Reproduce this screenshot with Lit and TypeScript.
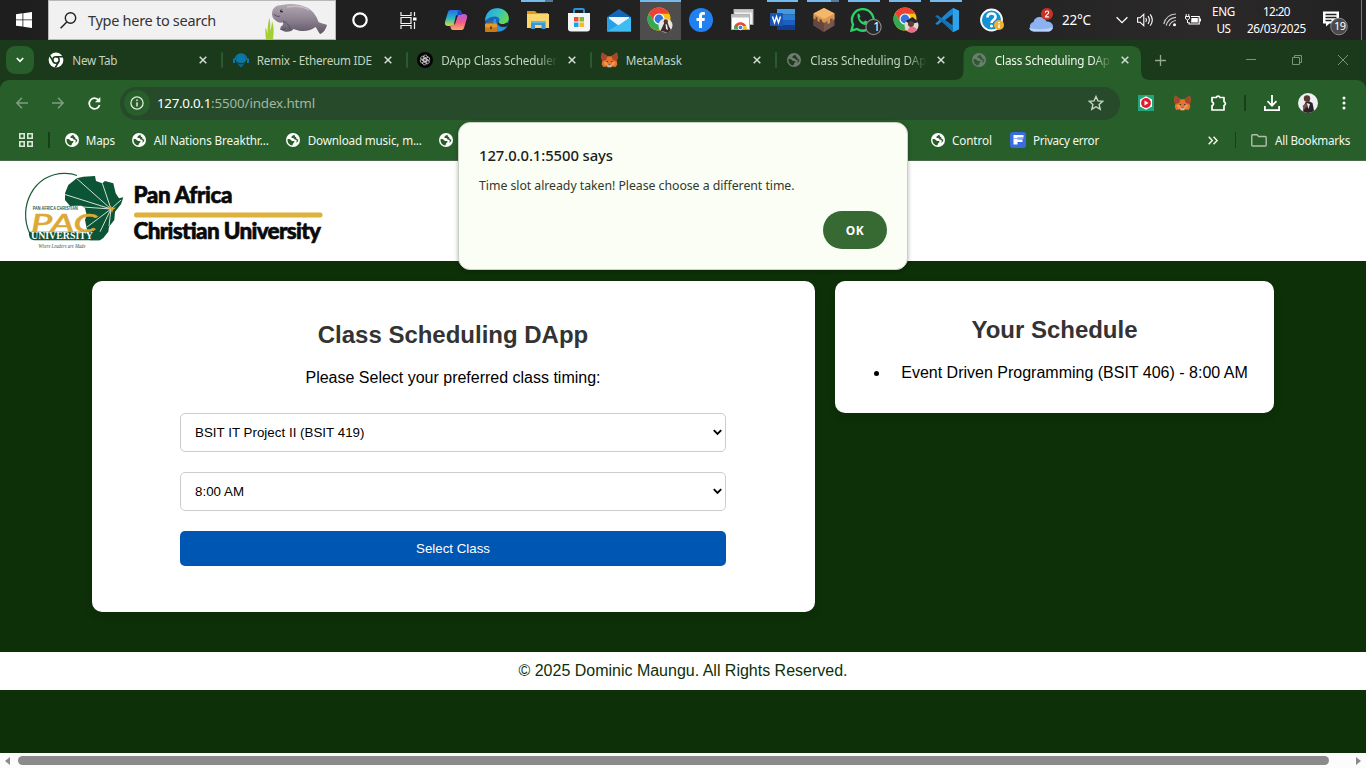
import { LitElement, html, css, svg } from "lit";
import { customElement, property } from "lit/decorators.js";

/** A line of text that is tracked so that it spans a given width. */
@customElement("fit-text")
class FitText extends LitElement {
  @property({ type: Number }) w = 0;
  @property() text = "";
  static styles = css`
    :host { display: inline-block; flex: none; white-space: pre; }
    .t { display: inline-block; }
  `;
  render() {
    return html`<span class="t">${this.text}</span>`;
  }
  updated() {
    const el = this.renderRoot.querySelector(".t") as HTMLElement;
    el.style.letterSpacing = "0px";
    const natural = el.getBoundingClientRect().width;
    el.style.letterSpacing = (this.w - natural) / this.text.length + "px";
  }
}

const icon = (w: number, h: number, vb: string, body: unknown) =>
  html`<svg class="ic" width=${w} height=${h} viewBox=${vb} fill="none">${body}</svg>`;

const globe = (bg: string, fg: string) =>
  icon(14, 14, "0 0 14 14", svg`
    <circle cx="7" cy="7" r="7" fill=${bg}/>
    <path d="M1.500 6.200C3 5.600 4.600 6.300 5.400 7.500c.6.900 1.800.300 2.600.6.700.3.600 1.100 0 1.500-.9.500-.8 1.500-1.800 2.900C3.500 12.200 1.300 9.800 1.500 6.200z" fill=${fg}/>
    <path d="M8.600 1.700C8 2.300 6.300 2.100 6 3.200c-.9.300-1 1.800.3 1.900 1.200 0 1.700.3 2.100 1.100.5.900 1.600.3 2.200 1 .4.600 0 1.600-.6 2.500 1.500-.6 2.500-2 2.300-3.300-.7-.2-1.100 0-1.600-.5-.5-.6 0-1.500-.9-1.900-.8-.3-1.300-.9-1.200-2.300z" fill=${fg}/>`);

const fox = icon(17, 16, "0 0 18 17", svg`
  <path d="M1 .5 7 4.500h4L17 .500l.8 5.500-1.200 3.500.7 3.500-1.600 3-3.500-.7-1.500 1.200H7.300l-1.500-1.200-3.500.7L.7 13l.7-3.500L.2 6z" fill="#e8722b"/>
  <path d="M1 .5 7 4.500 5.300 8.500 1.400 9.500.2 6zM17 .5 11 4.500l1.700 4 3.900 1L17.800 6z" fill="#a8452a"/>
  <path d="M2.500 10.500 6.500 10l1 4-3 .5zM15.500 10.500l-4-.5-1 4 3 .5z" fill="#f5914a"/>
  <path d="M5 9.300l2.500.5-.4 1.300zM13 9.300l-2.500.5.4 1.300z" fill="#1f3a44"/>
  <path d="M7.300 13.200h3.400l.4 1.600-.8 1H7.700l-.8-1z" fill="#d8cfc6"/>
  <path d="M7.900 13.200h2.200l.2 1H7.700z" fill="#26313a"/>`);

const chromeBall = svg`
  <circle cx="12" cy="12" r="11.5" fill="#fbc116"/>
  <path d="M2 6.300A11.500 11.500 0 0 1 22.300 6.700L12 6.700 7.200 14.600z" fill="#ea4335"/>
  <path d="M2 6.300A11.500 11.500 0 0 0 11 23.450L16.500 14.800H7.200z" fill="#34a853"/>
  <circle cx="12" cy="12" r="5.500" fill="#fff"/><circle cx="12" cy="12" r="4.400" fill="#3474e0"/>`;

const ICONS: Record<string, unknown> = {
  copilot: icon(24, 24, "0 0 24 24", svg`
    <defs>
      <linearGradient id="a" x1="0" y1="0" x2="0" y2="1"><stop stop-color="#2b6be8"/><stop offset=".5" stop-color="#25b5c4"/><stop offset="1" stop-color="#d9d83c"/></linearGradient>
      <linearGradient id="b" x1="0" y1="0" x2="0" y2="1"><stop stop-color="#b65be6"/><stop offset=".5" stop-color="#ee5b86"/><stop offset="1" stop-color="#ffab68"/></linearGradient>
    </defs>
    <path d="M6.500 2H15c1.500 0 2 1 2.500 2.800L18 7h-2.500c-1.500 0-2.500.8-3 2.300L10.800 15c-.6 1.800-1.500 3-3.300 3H4c-2.500 0-3.500-1.500-3-4L4 4c.4-1.300 1.200-2 2.500-2z" fill="url(#a)"/>
    <path d="M17.500 22H9c-1.500 0-2-1-2.500-2.800L6 17h2.500c1.500 0 2.300-.8 2.800-2.300L13.200 9c.6-1.800 1.500-3 3.300-3H20c2.500 0 3.500 1.500 3 4l-3 10c-.4 1.300-1.200 2-2.500 2z" fill="url(#b)"/>
    <path d="M14 2c2 .1 3 1.500 4 5h-2.500c-1 0-1.600.2-2.200 1z" fill="#1e46c8"/>
    <path d="M11.300 14.700L13.200 9c.2-.7.500-1.300.9-1.800L12 7.300 9.800 16.800c.7-.4 1.200-1.100 1.500-2.100z" fill="#222325"/>`),
  edge: icon(24, 24, "0 0 24 24", svg`
    <defs><linearGradient id="e" x1="0" y1="0" x2="1" y2=".4"><stop stop-color="#2a9de0"/><stop offset=".6" stop-color="#35c4c4"/><stop offset="1" stop-color="#63d850"/></linearGradient></defs>
    <circle cx="12" cy="12" r="11.800" fill="#1767b8"/>
    <path d="M.2 11C1.500 4 6 .2 12.200.2c7 0 11.600 4.600 11.600 9.800 0 4-3 6-6.300 6-2.500 0-4.300-1-3.500-2.300 1.600-2.500-.5-5.200-4-5.200C6 8.500 2.500 10 .2 13z" fill="url(#e)"/>
    <path d="M13.500 13.500c-.6 1.400 1 2.600 4 2.600 2 0 3.500-.6 4.600-1.500l1.400 1.400-3 3-5-.5-3-3z" fill="#222325"/>
    <path d="M9 11c-2 3-1.500 9.500 3.500 12.500 4 .3 7.500-1.500 9.500-5-5 2-11.500.5-11-7.500z" fill="#2c93e0"/>
    <rect y="15.500" width="12" height="8.500" rx="1" fill="#c9791c"/><rect y="15.500" width="12" height="4" rx="1" fill="#e39a2d"/>
    <path d="M4 15.500V14h4v1.500" stroke="#a0600f"/><rect x="5" y="18.500" width="2" height="2.500" fill="#6d3f08"/>`),
  folder: icon(22, 20, "0 0 22 20", svg`
    <path d="M0 1h8l2 2h11v15H0z" fill="#d99c22"/><path d="M0 4h22v14H0z" fill="#fad66c"/>
    <path d="M4 11h14.500v8h-4v-4h-6.500v4H4z" fill="#3d96d4"/><path d="M4 11h14.500v2H4z" fill="#64b5e6"/>`),
  store: icon(24, 24, "0 0 24 24", svg`
    <path d="M7 6V2.200C7 1.500 7.500 1 8.200 1h7.600c.7 0 1.200.5 1.200 1.200V6" stroke="#2b93d8" stroke-width="2"/>
    <path d="M1 5h22v15.500c0 2-1 3-3 3H4c-2 0-3-1-3-3z" fill="#f4f5f6"/>
    <path d="M7 9h4.500v4.500H7z" fill="#f0502a"/><path d="M12.500 9H17v4.500h-4.500z" fill="#7ebb2d"/><path d="M7 14.500h4.500V19H7z" fill="#22a2e8"/><path d="M12.500 14.500H17V19h-4.500z" fill="#fbb924"/>`),
  mail: icon(24, 23, "0 0 24 23", svg`
    <path d="M0 8 12 0l12 8v14H0z" fill="#1467b8"/><path d="M2 8h20v9H2z" fill="#e9f4fb"/>
    <path d="M0 8l12 9L24 8v14.500H0z" fill="#27a0e6"/><path d="M24 8v14.500H0z" fill="#3fbcf2"/><path d="M1.500 8h21L12 16z" fill="#eef6fc"/>`),
  chromeA: icon(26, 26, "0 0 26 26", svg`${chromeBall}
    <circle cx="18.500" cy="18.500" r="7" fill="#e9e6e2"/><path d="M13.500 24l3-6.500 1-2h3l1.500 4 2 3.500-3 2.400z" fill="#3b2b30"/><circle cx="18.800" cy="14.500" r="2.200" fill="#5b352d"/><path d="M18.500 17l1.500.5 1 5.500-2-1z" fill="#efeaea"/>`),
  facebook: icon(24, 24, "0 0 24 24", svg`
    <circle cx="12" cy="12" r="12" fill="#1f80f2"/>
    <path d="M10 20v-7H7.500V10H10V8c0-2.700 1.500-4 3.800-4 1 0 1.900.1 2.200.2v2.600h-1.500c-1.200 0-1.500.7-1.500 1.600V10h2.900l-.4 3H13v7z" fill="#fff"/>`),
  remote: icon(24, 22, "0 0 24 22", svg`
    <rect x="4" y="0.500" width="19" height="15" fill="#f1f1f1" stroke="#a9a9a9"/><rect x="4" y="0.500" width="19" height="3" fill="#c5c5c5"/>
    <rect x="1.500" y="5.500" width="18" height="15" fill="#fff" stroke="#a9a9a9"/><rect x="1.500" y="5.500" width="18" height="3" fill="#bdbdbd"/>
    <path d="M4 20a6.500 6.500 0 0 1 13 0z" fill="#f6c026"/><path d="M4 18a6.500 6.500 0 0 1 12.200-1H11l-3 3z" fill="#e64a3b"/><path d="M4 20c0-2 .5-3 1.500-4l3 4z" fill="#3ba757"/><circle cx="10.500" cy="18.500" r="2.300" fill="#3c7de6" stroke="#fff"/>`),
  word: icon(25, 22, "0 0 25 22", svg`
    <path d="M7 0h18v5.500H7z" fill="#3f9be8"/><path d="M7 5.500h18V11H7z" fill="#2b7cd3"/><path d="M7 11h18v5.500H7z" fill="#1d5fbe"/><path d="M7 16.500h18V21H7z" fill="#103f91"/>
    <rect y="4" width="13" height="13" rx="1" fill="#1a56b4"/><path d="M2.500 7.500l2 6.200 2-6.200 2 6.200 2-6.200" stroke="#fff" stroke-width="1.400"/>`),
  block: icon(22, 24, "0 0 22 24", svg`
    <path d="M11 0l10.500 5.500v12L11 24 .5 17.500v-12z" fill="#77564e"/><path d="M.5 6L11 12v12L.5 17.500z" fill="#654740"/>
    <path d="M11 0l10.500 5.500V11l-2 1.500V10l-2.500 1v4l-2.500 1v-3L11 15l-2-1.500V12l-2.500-1v3l-2-1V9.500L2.500 8.500v3L.5 10.500v-5z" fill="#d9984f"/><path d="M11 0l10.500 5.500L11 11 .5 5.500z" fill="#f3b86c"/>`),
  whatsapp: icon(34, 28, "0 0 34 28", svg`
    <path d="M3.500 24.500l1.500-6A10.800 10.800 0 1 1 9 23z" fill="#222325" stroke="#2bd366" stroke-width="2.300"/>
    <path d="M9.500 8l1.500-.5 1.500 3-1.200 1.500c1 2 2.200 3.200 4.200 4l1.700-1.600 3 1.500c0 2-1.500 3-3.300 3C12 18.500 9 13 9.500 8z" fill="#2bd366"/>
    <circle cx="25.500" cy="21" r="7.600" fill="#29292b" stroke="#858587" stroke-width="1.200"/>`),
  chromeB: icon(26, 26, "0 0 26 26", svg`${chromeBall}
    <circle cx="18.500" cy="18.500" r="7" fill="#e9d4d6"/><path d="M12.500 14l7-4 6 5-3 1-6 1z" fill="#222631"/><circle cx="18" cy="17" r="3" fill="#633c36"/><path d="M14 24l3-4h4l3 2-3 3.500h-4z" fill="#ee6c88"/>`),
  vscode: icon(24, 24, "0 0 24 24", svg`
    <path d="M18 0l6 2.800v18.400L18 24 7 13.500 2.500 17 .2 15.700 14 3z" fill="#1a86cf"/><path d="M.2 8.300L2.500 7 18 19v5L7 14z" fill="#1272b8"/><path d="M17.500 6.500v11L10 12z" fill="#222325"/><path d="M18 0l6 2.800v18.400L18 24z" fill="#2ea3ea"/>`),
  help: icon(24, 24, "0 0 24 24", svg`
    <circle cx="11.500" cy="12" r="10.500" fill="#1391d3" stroke="#fff" stroke-width="1.800"/>
    <path d="M7.500 9.500C7.500 7 9 5.500 11.500 5.500s4 1.400 4 3.500c0 3-4 3-4 6" stroke="#fff" stroke-width="2.600"/><circle cx="11.500" cy="18" r="1.600" fill="#fff"/>
    <circle cx="19" cy="17" r="5" fill="#eeb132"/><path d="M19 14v1.200M19 16.500V20" stroke="#fff" stroke-width="1.600"/>`),
};

const PINNED: { name: string; cls: string }[] = [
  { name: "copilot", cls: "" },
  { name: "edge", cls: "" },
  { name: "folder", cls: "open multi" },
  { name: "store", cls: "" },
  { name: "mail", cls: "" },
  { name: "chromeA", cls: "open current" },
  { name: "facebook", cls: "" },
  { name: "remote", cls: "" },
  { name: "word", cls: "open" },
  { name: "block", cls: "open multi" },
  { name: "whatsapp", cls: "open" },
  { name: "chromeB", cls: "open" },
  { name: "vscode", cls: "open" },
];

const TAB_ICONS: Record<string, unknown> = {
  chrome: icon(16, 16, "0 0 16 16", svg`<circle cx="8" cy="8" r="7.400" fill="#fff"/><circle cx="8" cy="8" r="3.200" stroke="#1a3a1b" stroke-width="1.500"/><path d="M8 4.800H15M5.200 9.500 1.700 3.600M10.800 9.500 7.300 15.500" stroke="#1a3a1b" stroke-width="1.500"/>`),
  remix: icon(16, 16, "0 0 16 16", svg`<circle cx="8" cy="7.500" r="5" fill="#0a77a8"/><path d="M2 8a6 6 0 0 1 12 0" stroke="#0a77a8" stroke-width="1.300"/><path d="M0 6.500h2v4.500H0zM14 6.500h2v4.500h-2z" fill="#0a77a8"/><path d="M3.500 10.500L8 15.500l4.500-5z" fill="#0b6b96"/><path d="M4 10.500c2 1.800 6 1.800 8 0" stroke="#1a3a1b"/>`),
  gpt: icon(16, 16, "0 0 16 16", svg`<circle cx="8" cy="8" r="8" fill="#050505"/><g stroke="#e6e6e6" stroke-width=".7">${[0, 60, 120, 180, 240, 300].map((r) => svg`<path transform=${`rotate(${r} 8 8)`} d="M6.300 9V5.200C6.300 3.500 8 2.700 9.400 3.400c1 .5 1.200 1.500 1.200 2.300L8 7.200"/>`)}</g>`),
  fox,
  globe: globe("#6f7b70", "#1c3d1d"),
  globeOn: globe("#6f7b70", "#285e2a"),
};

const TABS = [
  { ic: "chrome", text: "New Tab", w: 45, fade: false, on: false },
  { ic: "remix", text: "Remix - Ethereum IDE", w: 115, fade: false, on: false },
  { ic: "gpt", text: "DApp Class Scheduler", w: 116, fade: true, on: false },
  { ic: "fox", text: "MetaMask", w: 56, fade: false, on: false },
  { ic: "globe", text: "Class Scheduling DAp", w: 116, fade: true, on: false },
  { ic: "globeOn", text: "Class Scheduling DAp", w: 115, fade: true, on: true },
];

const cross = icon(8, 8, "0 0 8 8", svg`<path d="M.7.7l6.600 6.600M7.300.7.7 7.300" stroke="currentColor" stroke-width="1.500"/>`);

const manatee = icon(64, 38, "0 0 64 38", svg`
  <defs><linearGradient id="m" x1="0" y1="0" x2="0" y2="1"><stop stop-color="#b3a9b4"/><stop offset=".55" stop-color="#8a7f8e"/><stop offset="1" stop-color="#5e5564"/></linearGradient></defs>
  <path d="M1 38c-1-4 0-9-1-12 2 1 2 4 2.500 7 0-6 .5-13 2-17 1 5 1 9 .5 13 1-2 2-7 2-10 2 5 2 11 1 19z" fill="#a3cf35"/>
  <path d="M7 12c0-6 4-9 10-9 8-2 18-1 26 3 6 4 9 9 10.500 14 3 2 6.500 1.500 8.500 3-1 4-3.500 8-7 9-2-2-2.500-5-4.500-7-6 5-15 5-22 2-1 2-5 3.500-9 2.500-3-1-5-3-3.500-5 1.500-.8 2.500-2 2-4-3.500.5-6-.500-8-2.500-2-1.500-3-3.500-3-6z" fill="url(#m)"/>
  <path d="M18 19c3 1.500 7 4 7 9M9 12c1 2 4 3 6 2M15 27c2 1 4 1 6-1" stroke="#584d5d" stroke-width="1"/><circle cx="16.500" cy="9" r="1.500" fill="#2c2530"/><circle cx="17" cy="8.500" r=".5" fill="#fff"/>
  <path d="M22 5c8-1.500 16-1 22 3" stroke="#c8bfc9" stroke-width="1.500"/>`);

const person = icon(20, 20, "0 0 20 20", svg`
  <defs><clipPath id="p"><circle cx="10" cy="10" r="10"/></clipPath></defs>
  <g clip-path="url(#p)"><path d="M0 0h20v20H0z" fill="#eef1f3"/><path d="M5 20l.500-6 2-5 3-1 4 2 2 10z" fill="#2b2229"/><path d="M8.500 10l2 6 1.500-5z" fill="#e8e8ee"/><circle cx="9" cy="5.500" r="3.200" fill="#5a3730"/><path d="M4.500 13l3-2.500 2 2-3 4z" fill="#7c5046"/></g>`);

const logo = icon(340, 100, "0 0 340 100", svg`
  <path d="M30 73C17 46 34 12 65 12.300q7 0 12 2.200" stroke="#1f5b3b" stroke-width="1.200"/>
  <path d="M76.700 17.300 83.300 15.700 95 15l1 5 6.300 2.300 2.700-2.300 8.300 2.300 2.400 10 3.300 5 4.300-1-2.300 7-6 7.400-.7 8.300-5.300 6.700-.7 5L103.300 77l-3.300 2.300H90L86.700 67.300 85 59l1.700-5-1.700-6.700-3.300-2.600H76l-6 .3-5-6v-6.700L68.300 24z" fill="#0c5436"/>
  <path d="M111 48L65 33.500M111 48 76.700 17.500M111 48 102.300 22.300M111 48 83 46M111 48 87 66M111 48 96 79M111 48 109 65M111 48l10-9" stroke="#e9f1e4" stroke-width=".9"/>
  <path d="M108 47l3-2 1 2 4-.5-3 2.500-1 3-1-3z" fill="#e2a82b"/>
  <path d="M29 70.700h74q1 6-4 8.600H34q-6-1-5-8.600z" fill="#0c5436"/>
  <text x="32.700" y="49.300" class="tag" textLength="45" lengthAdjust="spacingAndGlyphs">PAN AFRICA CHRISTIAN</text>
  <text x="31" y="70.800" class="pac" textLength="66" lengthAdjust="spacingAndGlyphs">PAC</text>
  <text x="31" y="78.200" class="uni" textLength="62" lengthAdjust="spacingAndGlyphs">UNIVERSITY</text>
  <text x="38.500" y="86.700" class="lead" textLength="47" lengthAdjust="spacingAndGlyphs">Where Leaders are Made</text>
  <text x="133.500" y="41.500" class="name" textLength="99" lengthAdjust="spacing">Pan Africa</text>
  <rect x="134" y="51.500" width="188.500" height="5" rx="2.500" fill="#deb03c"/>
  <text x="133.500" y="78.300" class="name" textLength="187.500" lengthAdjust="spacing">Christian University</text>`);

const folderOutline = icon(16, 13, "0 0 16 13", svg`<path d="M.75 11V1.750Q.75.750 1.750.750H6l1.700 1.700h6.500q1 0 1 1V11q0 1-1 1H1.750q-1 0-1-1z" stroke="#aebfab" stroke-width="1.400"/>`);

@customElement("app-root")
class AppRoot extends LitElement {
  static styles = css`
    :host { display: flex; flex-direction: column; width: 1366px; height: 768px; overflow: hidden; position: relative; background: #0d3008; font-family: "Noto Sans", "Open Sans", sans-serif; font-size: 11.700px; color: #fff; }
    * { box-sizing: border-box; }
    .ic { display: block; flex: none; overflow: visible; }
    .row { display: flex; align-items: center; }
    .mid { display: flex; align-items: center; justify-content: center; flex: none; }

    .taskbar { flex: none; height: 40px; display: flex; background: linear-gradient(90deg, #1e1e1f, #232324 70%, #2b292a 88%, #222122); }
    .start { width: 48px; }
    .search { width: 288px; height: 40px; background: #f1f1f1; color: #343434; border: 1px solid #b8b8b8; font-size: 14.500px; padding-left: 11px; display: flex; align-items: center; }
    .search fit-text { margin-left: 11px; }
    .search .manatee { margin-left: 49px; padding-top: 1px; }
    .cell48 { width: 48px; }
    .gap3 { width: 3.400px; flex: none; }
    .app { width: 40.900px; height: 40px; flex: none; display: flex; align-items: center; justify-content: center; position: relative; }
    .current { background: #4d4d4e; }
    .open::before { content: ""; position: absolute; top: 0; left: 4px; right: 5px; height: 2px; background: #76b9ed; }
    .current::before { left: 0; right: 0; }
    .multi::after { content: ""; position: absolute; top: 0; right: 5px; width: 8px; height: 2px; background: #557a9a; }
    .app .count { position: absolute; left: 28.500px; top: 19px; width: 8px; text-align: center; font-size: 12px; line-height: 16px; }
    .help { width: 50px; }
    .weather { margin-left: 12.500px; }
    .temp { font-size: 13.500px; margin-left: 8.500px; width: 54.500px; flex: none; }
    .tray { flex: none; }
    .tray .ic { margin-right: 9px; }
    .tray .ic:nth-child(3) { margin-right: 7px; }
    .tray .ic:nth-child(4) { margin-right: 0; }
    .lang { width: 36px; margin-left: 4px; flex: none; display: flex; flex-direction: column; align-items: center; justify-content: center; }
    .lang fit-text, .clock fit-text { line-height: 17px; }
    .clock { width: 70px; flex: none; display: flex; flex-direction: column; align-items: center; justify-content: center; }
    .notes { width: 48px; position: relative; justify-content: flex-start; padding-left: 12px; }
    .notes fit-text { position: absolute; left: 22.500px; top: 18px; font-size: 11px; line-height: 16px; }
    .edge { width: 1px; height: 40px; background: #777; margin-left: auto; margin-right: 4px; flex: none; }

    .strip { flex: none; height: 40px; display: flex; align-items: center; background: #1a3a1b; color: #c3d3c2; }
    .menu { width: 28px; height: 28px; border-radius: 9px; background: #285e2a; margin: 0 4px 0 6px; }
    .tab { width: 184.500px; height: 40px; padding-left: 10px; display: flex; align-items: center; flex: none; position: relative; }
    .tab .fav { width: 16px; height: 18px; margin-right: 8.300px; }
    .tab .title { width: 118px; overflow: hidden; display: block; height: 18px; line-height: 18px; }
    .tab .fade { -webkit-mask-image: linear-gradient(90deg, #000 82%, transparent 99%); }
    .tab .close { width: 26px; color: #d5ded4; }
    .tab.line::after { content: ""; width: 2px; height: 16px; border-radius: 1px; background: #2b5a2d; position: absolute; right: -.5px; top: 12px; }
    .tab.on { color: #f0f7ee; margin-right: -4px; }
    .tab.on > * { position: relative; }
    .tab.on .close { left: -1px; }
    .shape { position: absolute !important; left: -7px; top: 6px; }
    .plus { width: 34px; margin-left: 2.500px; color: #93a792; }
    .wins { margin-left: auto; display: flex; color: #7d917c; }
    .wins .mid { width: 46px; height: 40px; }
    .under { background: #1a3a1b; flex: none; }
    .chrome { background: #285e2a; border-radius: 9px 9px 0 0; height: 81px; border-bottom: 1px solid #4c6b4a; }
    .nav { height: 46px; display: flex; align-items: center; padding-left: 4px; }
    .nav .btn { width: 36px; }
    .omni { width: 1000px; height: 33px; border-radius: 17px; background: #264a2a; margin-left: 8px; margin-right: 8px; display: flex; align-items: center; font-size: 13.400px; flex: none; }
    .info { width: 26px; height: 26px; border-radius: 13px; background: #285e2a; margin: 0 7px 0 4px; }
    .path { color: #a2b7a1; }
    .star { margin-left: 773px; }
    .ext { width: 36px; }
    .split { width: 18px; }
    .vline { width: 1.500px; height: 16px; background: #173f19; }
    .marks { height: 28px; display: flex; align-items: center; padding-left: 19px; color: #f2f8f0; }
    .marks .m { display: flex; align-items: center; gap: 7.300px; margin-right: 17.700px; flex: none; }
    .marks .vline { margin: 0 15px; }
    .marks .m fit-text { line-height: 16px; margin-top: -1px; }
    .hiddenrun { width: 459.500px; flex: none; }
    .marks .more { margin-left: 91px; margin-right: 2px; }
    .marks .m.last { margin: 0; gap: 8px; }

    .head { flex: none; height: 100px; background: #fff; }
    .tag { font: 4.500px "Liberation Sans", sans-serif; fill: #315c45; font-weight: bold; }
    .pac { font: italic 25px Lato, "Open Sans", sans-serif; font-weight: 500; fill: #dda935; stroke: #dda935; stroke-width: .5; }
    .uni { font: bold 9.600px "Liberation Serif", serif; fill: #fff; }
    .lead { font: italic 5.500px "Liberation Serif", serif; fill: #315c45; }
    .name { font: 900 22.500px Lato, sans-serif; fill: #0a0a0a; stroke: #0a0a0a; stroke-width: .6; }

    .page { flex: 1; display: flex; flex-direction: column; font-family: "Liberation Sans", Arial, sans-serif; font-size: 16px; color: #000; }
    .cards { display: flex; align-items: flex-start; gap: 20px; padding: 20px 0 0 92px; height: 391px; }
    .card { background: #fff; border-radius: 10px; box-shadow: 0 4px 8px rgba(0, 0, 0, .1); display: flex; flex-direction: column; align-items: center; }
    .booking { width: 723px; height: 331px; padding-top: 40px; padding-right: 1px; }
    .mine { width: 439px; height: 132px; padding-top: 35px; }
    h2 { margin: 0; font-size: 24px; line-height: 28px; color: #333; }
    .lede { margin-top: 20px; line-height: 18px; }
    .select { width: 546px; height: 39px; border: 1px solid #ccc; border-radius: 5px; display: flex; align-items: center; justify-content: space-between; padding: 0 3px 0 14px; font-size: 13.300px; margin-top: 20px; }
    .first { margin-top: 26px; }
    .submit { width: 546px; height: 35px; border: 0; border-radius: 5px; background: #0056b3; color: #fff; margin-top: 20px; display: flex; align-items: center; justify-content: center; font-size: 13.300px; }
    .item { display: flex; align-items: center; margin-top: 19px; padding-left: 13px; line-height: 20px; }
    .dot { width: 5px; height: 5px; border-radius: 3px; background: #000; margin-right: 22px; }
    .foot { height: 38px; background: #fff; color: #0d3008; flex: none; }
    .scroll { flex: none; height: 15px; background: #fcfcfc; display: flex; align-items: center; padding: 0 5px; justify-content: space-between; }
    .thumb { width: 1311px; height: 9px; border-radius: 5px; background: #8b8b8b; margin-left: 8px; margin-right: auto; }

    .dialog { position: absolute; left: 458px; top: 122px; width: 450px; height: 148px; background: #fafef4; border-radius: 12px; border: 1px solid #c9d3c5; box-shadow: 0 1px 4px rgba(0, 0, 0, .3); padding: 21px 20px 0; display: flex; flex-direction: column; align-items: flex-start; color: #1d231c; }
    .says { font-size: 14.800px; font-weight: 550; line-height: 22px; color: #1a2019; }
    .msg { font-size: 12.300px; line-height: 18px; margin-top: 11px; color: #33382f; }
    .ok { align-self: flex-end; width: 64px; height: 38px; border-radius: 19px; background: #376933; color: #fff; font-weight: 700; font-size: 12px; margin-top: 16px; }
  `;

  private taskbar() {
    return html`<div class="taskbar">
      <div class="mid start">${icon(16, 16, "0 0 16 16", svg`<path d="M0 2.200 6.500 1.300v6.200H0zM7.300 1.200 16 0v7.500H7.300zM0 8.300h6.500v6.300L0 13.700zM7.300 8.300H16V16l-8.700-1.200z" fill="#fff"/>`)}</div>
      <div class="search">
        ${icon(17, 17, "0 0 17 17", svg`<circle cx="10.500" cy="6" r="5.200" stroke="#222" stroke-width="1.400"/><path d="M6.800 10 .6 16.200" stroke="#222" stroke-width="1.500"/>`)}
        <fit-text w="128" text="Type here to search"></fit-text>
        <div class="manatee">${manatee}</div>
      </div>
      <div class="mid cell48">${icon(16, 16, "0 0 16 16", svg`<circle cx="8" cy="8" r="6.700" stroke="#fff" stroke-width="2.200"/>`)}</div>
      <div class="mid cell48">${icon(17, 17, "0 0 17 17", svg`<path d="M1 0v3.500h10V0M1 17v-3.500h10V17M1 5.500h10v6H1zM14.500 0v4M14.500 10v7" stroke="#f4f4f4" stroke-width="1.200"/><path d="M13 5.500h3.500v3H13z" fill="#fff"/>`)}</div>
      <div class="gap3"></div>
      ${PINNED.map((p) => html`<div class="app ${p.cls}">${ICONS[p.name]}${p.name === "whatsapp" ? html`<span class="count">1</span>` : ""}</div>`)}
      <div class="mid help">${ICONS.help}</div>
      <div class="mid weather">${icon(24, 24, "0 0 24 24", svg`<path d="M5 23.500a4.800 4.800 0 0 1-.5-9.400C5 11 7.500 9 11 9c3 0 5.500 2 6.500 4.600 3.500-.3 6.500 1.900 6.500 5.200 0 2.700-2 4.700-4.500 4.700z" fill="#8db2f0"/><path d="M5 23.500c-2.500 0-4.500-1.500-4.900-3.700 4 1.700 17 2 23.700-.5-.4 2.500-2 4.200-4.300 4.200z" fill="#b8d0fa"/><circle cx="18" cy="6" r="6" fill="#c93327"/><path d="M16.300 4.700c.2-2.300 3.400-2.100 3.400-.1 0 1.600-3.300 2.600-3.300 4.300h3.500" stroke="#fff" stroke-width="1.100"/>`)}</div>
      <div class="row temp"><fit-text w="29" text="22°C"></fit-text></div>
      <div class="mid tray">
        ${icon(12, 8, "0 0 12 8", svg`<path d="M.6 1.200 6 6.600l5.400-5.400" stroke="#fff" stroke-width="1.300"/>`)}
        ${icon(17, 14, "0 0 17 14", svg`<path d="M.6 4.700h2.600L6.800 1.200v11.600L3.200 9.300H.6z" stroke="#fff" stroke-width="1.100"/><path d="M8.800 5q1.400 2 0 4M11 3.200q2.800 3.800 0 7.600M13.200 1.400q4.200 5.600 0 11.200" stroke="#fff" stroke-width="1.100"/>`)}
        ${icon(15, 14, "0 0 15 14", svg`<path d="M.8 11Q3 1.500 13 1M3.200 12.500Q5 5 13 4.300M6.200 13Q7.500 8.300 13 7.500" stroke="#c9c9c9" stroke-width="1.200"/><circle cx="11.500" cy="11.800" r="1.500" fill="#fff"/>`)}
        ${icon(16, 12, "0 0 16 12", svg`<path d="M6 2.500h8.200v7.500H4V8" stroke="#fff" stroke-width="1.200"/><path d="M6.500 4h6.300v4.500H6z" fill="#fff"/><path d="M14.500 4.500H16v3h-1.500z" fill="#fff"/><path d="M1.200 0v2.500M3.800 0v2.500M.5 2.500h4v2L2.500 6l-2-1.500zM2.500 6v3" stroke="#fff" stroke-width="1"/>`)}
      </div>
      <div class="lang"><fit-text w="23" text="ENG"></fit-text><fit-text w="14" text="US"></fit-text></div>
      <div class="clock"><fit-text w="27" text="12:20"></fit-text><fit-text w="59" text="26/03/2025"></fit-text></div>
      <div class="mid notes">${icon(26, 26, "0 0 26 26", svg`<path d="M0 4.500h16v12H6.500l-3.500 3v-3H0z" fill="#fff"/><path d="M2.500 7.500h11M2.500 10.500h11M2.500 13.500h6" stroke="#222" stroke-width="1.300"/><circle cx="16" cy="19.500" r="8.300" fill="#4a4a4b" stroke="#8a8a8a"/>`)}<fit-text w="11.500" text="19"></fit-text></div>
      <div class="edge"></div>
    </div>`;
  }

  private tabs() {
    return html`<div class="strip">
      <div class="mid menu">${icon(8, 6, "0 0 8 6", svg`<path d="M.8 1 4 4.300 7.200 1" stroke="#fff" stroke-width="1.700"/>`)}</div>
      ${TABS.map((t, i) => html`<div class="tab ${t.on ? "on" : i < 4 ? "line" : ""}">
        ${t.on ? html`<svg class="shape" width="198" height="34" viewBox="0 0 198 34"><path d="M0 34q9.500 0 9.500-9.500V10Q9.500 0 19.500 0h157.500q10 0 10 10v14.500q0 9.500 9.500 9.500z" fill="#285e2a"/></svg>` : ""}
        <span class="mid fav">${TAB_ICONS[t.ic]}</span>
        <span class="title ${t.fade ? "fade" : ""}"><fit-text w=${t.w} text=${t.text}></fit-text></span>
        <span class="mid close">${cross}</span>
      </div>`)}
      <div class="mid plus">${icon(11, 11, "0 0 11 11", svg`<path d="M5.500 0v11M0 5.500h11" stroke="currentColor" stroke-width="1.300"/>`)}</div>
      <div class="wins">
        <span class="mid">${icon(10, 10, "0 0 10 10", svg`<path d="M0 4.500h10" stroke="currentColor"/>`)}</span>
        <span class="mid">${icon(10, 10, "0 0 10 10", svg`<path d="M.5 2.500h7v7h-7zM2.500 2.500v-2h7v7h-2" stroke="currentColor"/>`)}</span>
        <span class="mid">${icon(10, 10, "0 0 10 10", svg`<path d="M0 0l10 10M10 0 0 10" stroke="currentColor"/>`)}</span>
      </div>
    </div>`;
  }

  private toolbar() {
    const g = globe("#fff", "#285e2a");
    return html`<div class="under"><div class="chrome">
      <div class="nav">
        <span class="mid btn">${icon(12, 12, "0 0 12 12", svg`<path d="M12 6H1M6 .8.900 6 6 11.200" stroke="#7f9f7f" stroke-width="1.500"/>`)}</span>
        <span class="mid btn">${icon(12, 12, "0 0 12 12", svg`<path d="M0 6h11M6 .8 11.100 6 6 11.200" stroke="#7f9f7f" stroke-width="1.500"/>`)}</span>
        <span class="mid btn">${icon(13, 13, "0 0 13 13", svg`<path d="M11 3.700A5.300 5.300 0 1 0 11.600 8" stroke="#fff" stroke-width="1.700"/><path d="M12.300 0v5.300H7z" fill="#fff"/>`)}</span>
        <div class="omni">
          <span class="mid info">${icon(14, 14, "0 0 14 14", svg`<circle cx="7" cy="7" r="6.100" stroke="#dfe9dd" stroke-width="1.300"/><path d="M7 3.400v1.600M7 6.300v4.300" stroke="#dfe9dd" stroke-width="1.500"/>`)}</span>
          <fit-text w="54" text="127.0.0.1"></fit-text><fit-text class="path" w="104" text=":5500/index.html"></fit-text>
          <span class="star">${icon(16, 16, "0 0 16 16", svg`<path d="M8 1.500l1.900 4.400 4.800.4-3.600 3.200 1.100 4.700L8 11.700l-4.200 2.500 1.100-4.700L1.300 6.300l4.800-.4z" stroke="#c8d5c6" stroke-width="1.400"/>`)}</span>
        </div>
        <span class="mid ext">${icon(16, 16, "0 0 16 16", svg`<path d="M0 0h16v16H0z" fill="#1fa67a"/><path d="M8 1.200l6 3.300v7L8 14.800l-6-3.300v-7z" fill="#fff"/><circle cx="8" cy="8" r="4.900" fill="#e01b2c"/><path d="M6.500 5.500 10.500 8l-4 2.500z" fill="#fff"/>`)}</span>
        <span class="mid ext">${fox}</span>
        <span class="mid ext">${icon(17, 17, "0 0 17 17", svg`<path d="M2 2.500h4.200a2 2 0 0 1 3.800 0h4v4.200a2 2 0 0 1 0 3.800V15H2v-4.300a2 2 0 0 0 0-3.900z" stroke="#fff" stroke-width="1.700" stroke-linejoin="round"/>`)}</span>
        <span class="mid split"><span class="vline"></span></span>
        <span class="mid ext">${icon(16, 16, "0 0 16 16", svg`<path d="M8 0v10.500M3.500 6.200 8 10.700l4.500-4.500M.9 11v4.100h14.200V11" stroke="#fff" stroke-width="1.800"/>`)}</span>
        <span class="mid ext">${person}</span>
        <span class="mid ext">${icon(4, 14, "0 0 4 14", svg`<circle cx="2" cy="2" r="1.500" fill="#fff"/><circle cx="2" cy="7" r="1.500" fill="#fff"/><circle cx="2" cy="12" r="1.500" fill="#fff"/>`)}</span>
      </div>
      <div class="marks">
        ${icon(14, 14, "0 0 14 14", svg`<path d="M.8.800h4.400v4.400H.800zM8.800.800h4.400v4.400H8.800zM.8 8.800h4.400v4.400H.800zM8.800 8.800h4.400v4.400H8.800z" stroke="#dbe7d8" stroke-width="1.600"/>`)}
        <span class="vline"></span>
        <span class="m">${g}<fit-text w="29" text="Maps"></fit-text></span>
        <span class="m">${g}<fit-text w="115" text="All Nations Breakthr..."></fit-text></span>
        <span class="m">${g}<fit-text w="114" text="Download music, m..."></fit-text></span>
        <span class="m">${g}</span>
        <span class="hiddenrun"></span>
        <span class="m">${g}<fit-text w="40" text="Control"></fit-text></span>
        <span class="m">${icon(16, 16, "0 0 16 16", svg`<rect width="16" height="16" rx="3" fill="#3a6be0"/><path d="M3.500 3h10v2.500H7.500v2h5V10H7.500v2.500h-4z" fill="#fff"/><path d="M3.500 6.500h10" stroke="#8eaaf0"/>`)}<fit-text w="66" text="Privacy error"></fit-text></span>
        <span class="more">${icon(10, 9, "0 0 10 9", svg`<path d="M.7.700 4.300 4.500.7 8.300M5.500.700 9.100 4.500 5.500 8.300" stroke="#eef5ec" stroke-width="1.500"/>`)}</span>
        <span class="vline"></span>
        <span class="m last">${folderOutline}<fit-text w="75" text="All Bookmarks"></fit-text></span>
      </div>
    </div></div>`;
  }

  render() {
    const arrow = icon(9, 7, "0 0 9 7", svg`<path d="M.8 1.200 4.500 5l3.700-3.800" stroke="#000" stroke-width="1.900"/>`);
    return html`
      ${this.taskbar()}${this.tabs()}${this.toolbar()}
      <div class="head">${logo}</div>
      <div class="page">
        <div class="cards">
          <div class="card booking">
            <h2><fit-text w="270.500" text="Class Scheduling DApp"></fit-text></h2>
            <div class="lede"><fit-text w="295" text="Please Select your preferred class timing:"></fit-text></div>
            <div class="select first"><fit-text w="169.500" text="BSIT IT Project II (BSIT 419)"></fit-text>${arrow}</div>
            <div class="select"><fit-text w="49" text="8:00 AM"></fit-text>${arrow}</div>
            <div class="submit"><fit-text w="74" text="Select Class"></fit-text></div>
          </div>
          <div class="card mine">
            <h2><fit-text w="166" text="Your Schedule"></fit-text></h2>
            <div class="item"><span class="dot"></span><fit-text w="346.500" text="Event Driven Programming (BSIT 406) - 8:00 AM"></fit-text></div>
          </div>
        </div>
        <div class="mid foot"><fit-text w="329" text="© 2025 Dominic Maungu. All Rights Reserved."></fit-text></div>
      </div>
      <div class="scroll">
        ${icon(5, 8, "0 0 5 8", svg`<path d="M5 0v8L0 4z" fill="#8b8b8b"/>`)}
        <div class="thumb"></div>
        ${icon(5, 8, "0 0 5 8", svg`<path d="M0 0v8l5-4z" fill="#8b8b8b"/>`)}
      </div>
      <div class="dialog">
        <div class="says"><fit-text w="134" text="127.0.0.1:5500 says"></fit-text></div>
        <div class="msg"><fit-text w="315.500" text="Time slot already taken! Please choose a different time."></fit-text></div>
        <div class="mid ok"><fit-text w="18.500" text="OK"></fit-text></div>
      </div>`;
  }
}
